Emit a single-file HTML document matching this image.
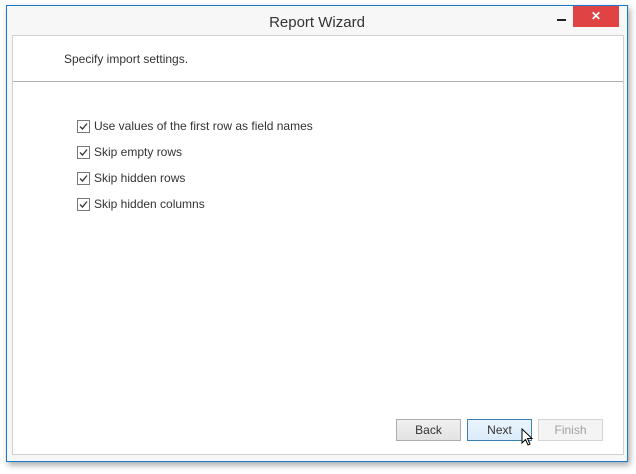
<!DOCTYPE html>
<html><head><style>
body{margin:0;width:636px;height:474px;background:#fff;position:relative;overflow:hidden;font-family:"Liberation Sans",sans-serif;}
.win{position:absolute;left:6px;top:5px;width:620px;height:455px;border:1px solid #1979ca;background:#f7f7f7;box-shadow:2px 3px 6px rgba(0,0,0,0.35);}
.title{position:absolute;left:0;right:0;top:8px;text-align:center;font-size:15px;color:#333;}
.close{position:absolute;left:566px;top:0;width:46px;height:21px;background:#e04343;color:#fff;font-size:12px;text-align:center;line-height:20px;font-weight:bold;}
.min{position:absolute;left:550px;top:13px;width:9px;height:2px;background:#222;}
.panel{position:absolute;left:5px;top:29px;width:610px;height:418px;border:1px solid #d0d0d0;background:#fff;}
.hdr{position:absolute;left:0;top:0;width:610px;height:45px;border-bottom:1px solid #b0b0b0;}
.hdr span{position:absolute;left:51px;top:16px;font-size:12px;color:#333;}
.cb{position:absolute;left:64px;font-size:12px;color:#333;}
.cb i{position:absolute;left:0;top:1px;width:11px;height:11px;border:1px solid #777;background:#fff;}
.cb b{position:absolute;left:17px;top:0;font-weight:normal;white-space:nowrap;}
.btn{position:absolute;top:383px;width:63px;height:20px;border:1px solid #acacac;background:linear-gradient(#f0f0f0,#e3e3e3);font-size:12px;text-align:center;line-height:20px;color:#333;}
</style></head><body>
<div class="win">
<div class="title">Report Wizard</div>
<div class="min"></div>
<div class="close">✕</div>
<div class="panel">
<div class="hdr"><span>Specify import settings.</span></div>
<div class="cb" style="top:83px"><i><svg width="11" height="11"><path d="M2 5.5L4.5 8L9 2.5" stroke="#333" stroke-width="1.3" fill="none"/></svg></i><b>Use values of the first row as field names</b></div>
<div class="cb" style="top:109px"><i><svg width="11" height="11"><path d="M2 5.5L4.5 8L9 2.5" stroke="#333" stroke-width="1.3" fill="none"/></svg></i><b>Skip empty rows</b></div>
<div class="cb" style="top:135px"><i><svg width="11" height="11"><path d="M2 5.5L4.5 8L9 2.5" stroke="#333" stroke-width="1.3" fill="none"/></svg></i><b>Skip hidden rows</b></div>
<div class="cb" style="top:161px"><i><svg width="11" height="11"><path d="M2 5.5L4.5 8L9 2.5" stroke="#333" stroke-width="1.3" fill="none"/></svg></i><b>Skip hidden columns</b></div>
<div class="btn" style="left:383px">Back</div>
<div class="btn" style="left:454px;border-color:#3c7fb1;background:linear-gradient(#eaf4fc,#dcecfc)">Next</div>
<div class="btn" style="left:525px;border-color:#d5d5d5;background:#f4f4f4;color:#a0a0a0">Finish</div>
<svg style="position:absolute;left:508px;top:392px" width="14" height="20"><path d="M1 1L1 15L4.5 11.5L7 17L9 16L6.5 10.5L11 10.5Z" fill="#fff" stroke="#000" stroke-width="1"/></svg>
</div>
</div>
</body></html>
